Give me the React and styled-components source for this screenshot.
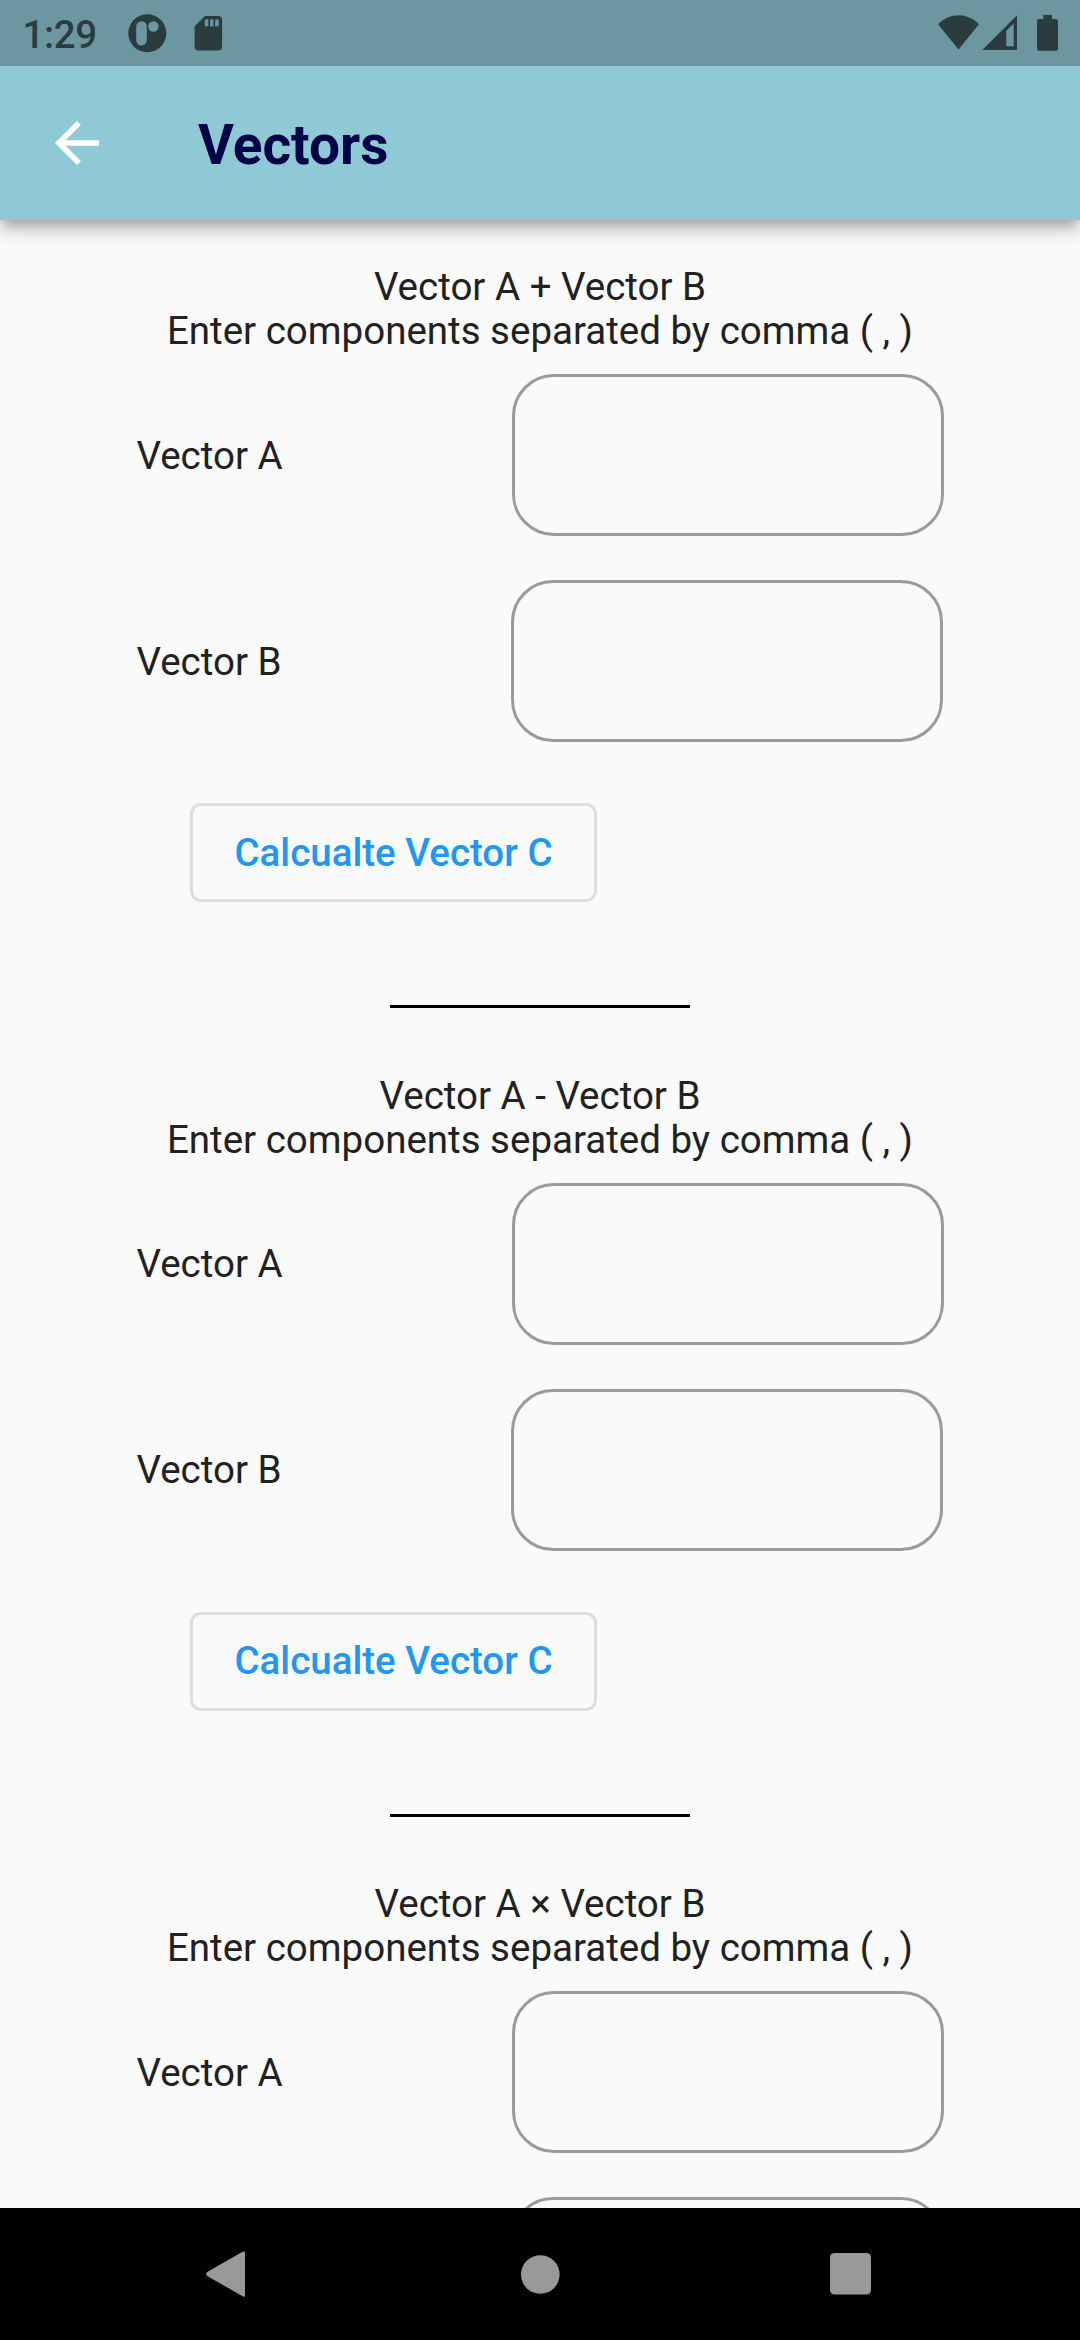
import React from "react";
import styled, { createGlobalStyle } from "styled-components";

const GlobalStyle = createGlobalStyle`
  *, *::before, *::after { box-sizing: border-box; }
  html, body { margin: 0; padding: 0; background: #fafafa; }
  body { font-family: Roboto, "Liberation Sans", sans-serif; }
`;

const Screen = styled.div`
  display: flex;
  flex-direction: column;
  width: 1080px;
  height: 2340px;
  overflow: hidden;
  background: #fafafa;
`;

const Header = styled.header`
  flex: none;
  z-index: 1;
  background: #8fc9d5;
  box-shadow: 0 6px 11px -3px rgba(0, 0, 0, 0.2), 0 11px 14px 0 rgba(0, 0, 0, 0.14),
    0 3px 28px 0 rgba(0, 0, 0, 0.12);
`;

const StatusBar = styled.div`
  display: flex;
  justify-content: space-between;
  height: 66px;
  padding: 0 22px 0 22.5px;
  background: #6d97a0;
  color: #2b3c40;
`;

const StatusGroup = styled.div`
  display: flex;
  align-items: flex-start;

  svg {
    display: block;
    fill: currentColor;
  }
`;

const Clock = styled.span`
  width: 101.5px;
  padding-top: 12px;
  font-size: 38.5px;
  font-weight: 500;
  line-height: 45px;
  letter-spacing: -0.4px;
`;

const Toolbar = styled.div`
  display: flex;
  align-items: center;
  height: 154px;
  padding-left: 44px;
`;

const BackButton = styled.button`
  display: block;
  width: 66px;
  height: 66px;
  margin: 0 88px 0 0;
  padding: 0;
  border: 0;
  background: none;
  color: #fff;

  svg {
    display: block;
    fill: currentColor;
  }
`;

const Title = styled.h1`
  margin: 4px 0 0;
  color: #000048;
  font-size: 55px;
  font-weight: 700;
  line-height: 64px;
`;

const Content = styled.main`
  flex: 1;
  min-height: 0;
  padding-top: 45px;
  overflow: hidden;
  color: #212121;
`;

const Section = styled.section`
  display: flex;
  flex-direction: column;
  height: 808.5px;
`;

const Heading = styled.p`
  margin: 0 0 21px;
  text-align: center;
  font-size: 38.5px;
  line-height: 44px;
`;

const FieldRow = styled.label`
  display: flex;
  flex: none;
  align-items: center;
  justify-content: space-between;
  height: 162px;
  margin-bottom: 44px;
  padding: 0 ${(p) => p.$end}px 0 136.5px;
  font-size: 38.5px;
  line-height: 44px;
`;

const LabelText = styled.span`
  padding-top: 1px;
`;

const Field = styled.input`
  width: 432px;
  height: 162px;
  padding: 0 33px;
  border: 3px solid #9b9b9b;
  border-radius: 42px;
  background: transparent;
  color: inherit;
  font: inherit;
  outline: none;
`;

const CalculateButton = styled.button`
  align-self: flex-start;
  flex: none;
  width: 407px;
  height: 99px;
  margin: 17px 0 103px 190px;
  padding: 0;
  border: 3px solid #dddddd;
  border-radius: 11px;
  background: transparent;
  color: #2196f3;
  font-family: inherit;
  font-size: 38.5px;
  font-weight: 500;
  line-height: 44px;
  white-space: nowrap;
`;

const Rule = styled.hr`
  flex: none;
  width: 300px;
  height: 3px;
  margin: 0 auto;
  border: 0;
  background: #000;
`;

const NavBar = styled.nav`
  display: flex;
  flex: none;
  align-items: center;
  justify-content: space-between;
  height: 132px;
  padding: 0 209px 0 206px;
  background: #000;

  svg {
    display: block;
    fill: #999;
  }
`;

const sections = [
  { sign: "+", rows: ["Vector A", "Vector B"], action: "Calcualte Vector C" },
  { sign: "-", rows: ["Vector A", "Vector B"], action: "Calcualte Vector C" },
  { sign: "×", rows: ["Vector A", ""] },
];

function NotificationIcons() {
  return (
    <svg width="100" height="66" viewBox="124 0 100 66">
      <path
        fillRule="evenodd"
        d="M147.3 14.3a19 19 0 1 1 0 38a19 19 0 1 1 0-38zM141.5 21.3a5.3 5.3 0 0 0-5.3 5.3v13.6a5.3 5.3 0 0 0 10.6 0v-13.6a5.3 5.3 0 0 0-5.3-5.3zM153.4 21.3a5.2 5.2 0 1 0 0 10.4a5.2 5.2 0 1 0 0-10.4z"
      />
      <path
        transform="translate(187.7 12.6) scale(1.719)"
        d="M18 2h-8L4.02 8 4 20c0 1.1.9 2 2 2h12c1.1 0 2-.9 2-2V4c0-1.1-.9-2-2-2zm-6 6h-2V4h2v4zm3 0h-2V4h2v4zm3 0h-2V4h2v4z"
      />
    </svg>
  );
}

function SystemIcons() {
  return (
    <svg width="122" height="66" viewBox="936 0 122 66">
      <path d="M958.5 49.5L938 24.3C943.5 18.6 950.5 15.2 958.5 15.2S973.5 18.6 979 24.3z" />
      <path fillRule="evenodd" d="M1017 15.3V50H982.3zM1013.7 23.5L1006.3 30.7V46.3H1013.7z" />
      <path d="M1043.3 15h8.7v4h3.7a2.3 2.3 0 0 1 2.3 2.3v27.2a2.3 2.3 0 0 1-2.3 2.3h-16.4a2.3 2.3 0 0 1-2.3-2.3v-27.2a2.3 2.3 0 0 1 2.3-2.3h4z" />
    </svg>
  );
}

function VectorSection({ sign, rows, action }) {
  return (
    <Section>
      <Heading>
        Vector A {sign} Vector B<br />
        Enter components separated by comma ( , )
      </Heading>
      {rows.map((label, index) => (
        <FieldRow key={index} $end={136 + index * 0.7}>
          <LabelText>{label}</LabelText>
          <Field type="text" />
        </FieldRow>
      ))}
      {action && (
        <>
          <CalculateButton type="button">{action}</CalculateButton>
          <Rule />
        </>
      )}
    </Section>
  );
}

export default function App() {
  return (
    <>
      <GlobalStyle />
      <Screen>
        <Header>
          <StatusBar>
            <StatusGroup>
              <Clock>1:29</Clock>
              <NotificationIcons />
            </StatusGroup>
            <StatusGroup>
              <SystemIcons />
            </StatusGroup>
          </StatusBar>
          <Toolbar>
            <BackButton type="button" aria-label="Back">
              <svg width="66" height="66" viewBox="0 0 24 24">
                <path d="M20 11H7.83l5.59-5.59L12 4l-8 8 8 8 1.41-1.41L7.83 13H20v-2z" />
              </svg>
            </BackButton>
            <Title>Vectors</Title>
          </Toolbar>
        </Header>
        <Content>
          {sections.map((section) => (
            <VectorSection key={section.sign} {...section} />
          ))}
        </Content>
        <NavBar>
          <svg width="44" height="46" viewBox="0 0 44 46">
            <path d="M36.6.8C38 0 39 .6 39 2V44.2C39 45.6 38 46.2 36.6 45.2L1.2 25C-.2 24-.2 22 1.2 21z" />
          </svg>
          <svg width="40" height="40" viewBox="0 0 40 40">
            <circle cx="20.3" cy="20.5" r="19.3" />
          </svg>
          <svg width="41" height="42" viewBox="0 0 41 42">
            <rect width="41" height="41.5" rx="4.5" />
          </svg>
        </NavBar>
      </Screen>
    </>
  );
}
